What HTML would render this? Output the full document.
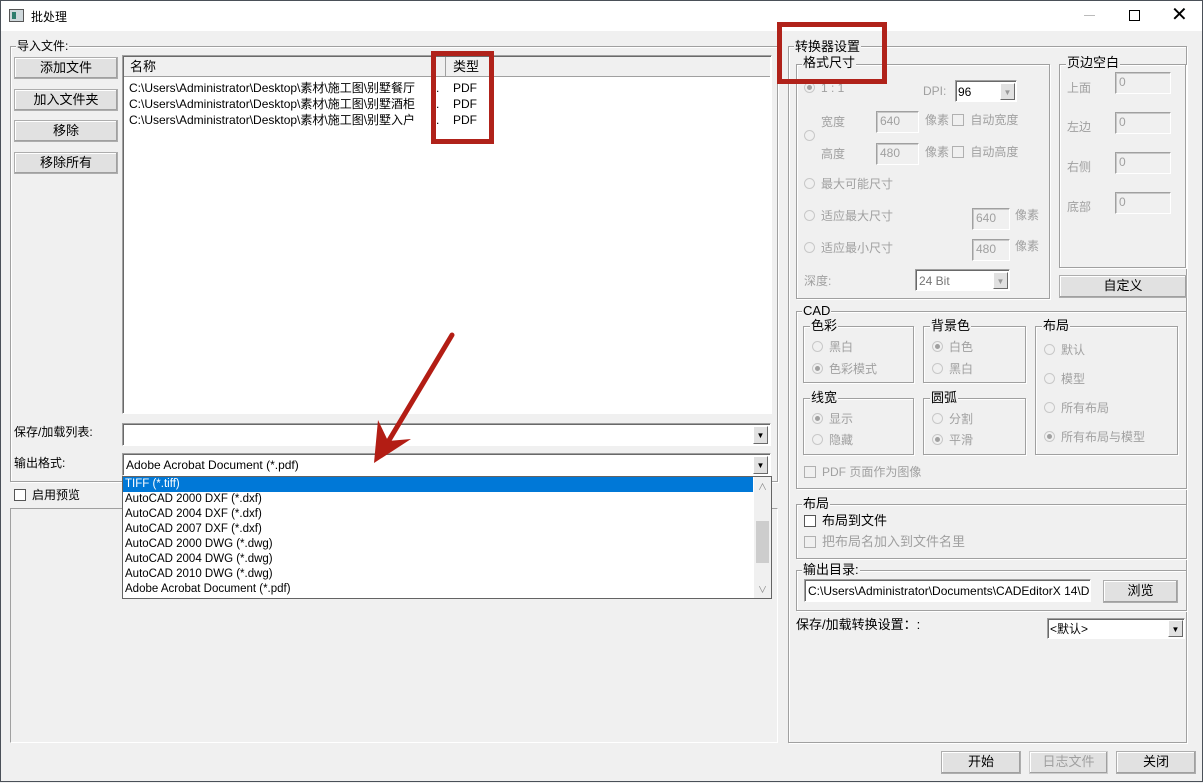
<!DOCTYPE html>
<html><head><meta charset="utf-8"><style>
*{box-sizing:border-box;margin:0;padding:0}
body{width:1203px;height:782px;background:#f0f0f0;position:relative;overflow:hidden;font-family:"Liberation Sans","Noto Sans CJK SC",sans-serif;font-size:12px;color:#000;border:1px solid #4a5058;line-height:14px}
.a{position:absolute;white-space:nowrap;line-height:14px}
.g{position:absolute;border:1px solid #a0a0a0;box-shadow:inset 1px 1px 0 #fff,1px 1px 0 #fff}
.gl{position:absolute;background:#f0f0f0;padding:0 1px;line-height:14px;white-space:nowrap}
.btn{position:absolute;background:#e1e1e1;border:1px solid #adadad;box-shadow:inset -1px -1px 0 #a0a0a0,inset 1px 1px 0 #fff;text-align:center;line-height:20px;font-size:13px}
.sunk{position:absolute;background:#fff;border:1px solid;border-color:#a0a0a0 #fff #fff #a0a0a0;box-shadow:inset 1px 1px 0 #696969}
.dis{color:#a0a0a0}
.tb{position:absolute;background:#f0f0f0;border:1px solid;border-color:#a0a0a0 #fff #fff #a0a0a0;box-shadow:inset 1px 1px 0 #c8c8c8;color:#a0a0a0;padding:2px 3px;line-height:14px}
.rad{display:inline-block;width:11px;height:11px;border:1px solid #c8c8c8;border-radius:50%;vertical-align:-1px;margin-right:6px;position:relative;background:#f0f0f0}
.rad.on::after{content:"";position:absolute;left:2px;top:2px;width:5px;height:5px;border-radius:50%;background:#a0a0a0}
.cb{display:inline-block;width:12px;height:12px;border:1px solid #555;background:#fff;vertical-align:-2px;margin-right:6px}
.cb.d{border-color:#b0b0b0;background:#f0f0f0}
.dd{position:absolute;width:15px;background:#e1e1e1;border:1px solid;border-color:#fff #696969 #696969 #fff;text-align:center;font-size:8px;line-height:17px}
</style></head><body>
<div class="a" style="left:0;top:0;width:1201px;height:30px;background:#fff"></div>
<div class="a" style="left:8px;top:8px;width:15px;height:13px;border:1px solid #555;background:#cfd8dc"><div style="position:absolute;left:2px;top:2px;width:4px;height:7px;background:#2e7d6e"></div></div>
<div class="a" style="left:30px;top:9px;font-size:12px">批处理</div>
<div class="a" style="left:1083px;top:14px;width:11px;height:1px;background:#bbb"></div>
<div class="a" style="left:1128px;top:9px;width:11px;height:11px;border:1px solid #000"></div>
<div class="a" style="left:1170px;top:4px;font-size:20px;line-height:20px;font-weight:300">✕</div>

<div class="g" style="left:9px;top:45px;width:768px;height:436px"></div>
<div class="gl" style="left:15px;top:38px">导入文件:</div>
<div class="btn" style="left:13px;top:56px;width:104px;height:22px">添加文件</div>
<div class="btn" style="left:13px;top:88px;width:104px;height:22px">加入文件夹</div>
<div class="btn" style="left:13px;top:119px;width:104px;height:22px">移除</div>
<div class="btn" style="left:13px;top:151px;width:104px;height:22px">移除所有</div>
<div class="sunk" style="left:121px;top:54px;width:650px;height:359px"></div>
<div class="a" style="left:123px;top:56px;width:646px;height:20px;background:#f0f0f0;border-bottom:1px solid #a0a0a0"></div>
<div class="a" style="left:444px;top:56px;width:1px;height:20px;background:#a0a0a0"></div>
<div class="a" style="left:129px;top:59px;font-size:13px">名称</div>
<div class="a" style="left:452px;top:59px;font-size:13px">类型</div>
<div class="a" style="left:128px;top:79px;line-height:16px">C:\Users\Administrator\Desktop\素材\施工图\别墅餐厅<br>C:\Users\Administrator\Desktop\素材\施工图\别墅酒柜<br>C:\Users\Administrator\Desktop\素材\施工图\别墅入户</div>
<div class="a" style="left:435px;top:79px;line-height:16px">.<br>.<br>.</div>
<div class="a" style="left:452px;top:79px;line-height:16px">PDF<br>PDF<br>PDF</div>

<div class="a" style="left:13px;top:424px">保存/加载列表:</div>
<div class="sunk" style="left:121px;top:422px;width:649px;height:23px"></div>
<div class="dd" style="left:752px;top:425px;height:18px">▼</div>
<div class="a" style="left:13px;top:455px">输出格式:</div>
<div class="sunk" style="left:121px;top:452px;width:649px;height:23px"></div>
<div class="a" style="left:125px;top:457px;font-size:12px">Adobe Acrobat Document (*.pdf)</div>
<div class="dd" style="left:752px;top:455px;height:18px">▼</div>

<div class="a" style="left:13px;top:487px"><span class="cb"></span>启用预览</div>
<div class="a" style="left:9px;top:507px;width:768px;height:235px;border:1px solid;border-color:#a0a0a0 #fff #fff #a0a0a0"></div>

<div class="a" style="left:121px;top:475px;width:650px;height:123px;background:#fff;border:1px solid #646464"></div>
<div class="a" style="left:122px;top:476px;width:630px;height:15px;background:#0078d7"></div>
<div class="a" style="left:124px;top:476px;line-height:15px;font-size:11.5px"><span style="color:#fff">TIFF (*.tiff)</span><br>AutoCAD 2000 DXF (*.dxf)<br>AutoCAD 2004 DXF (*.dxf)<br>AutoCAD 2007 DXF (*.dxf)<br>AutoCAD 2000 DWG (*.dwg)<br>AutoCAD 2004 DWG (*.dwg)<br>AutoCAD 2010 DWG (*.dwg)<br>Adobe Acrobat Document (*.pdf)</div>
<div class="a" style="left:753px;top:476px;width:17px;height:121px;background:#f0f0f0"></div>
<div class="a" style="left:755px;top:520px;width:13px;height:42px;background:#cdcdcd"></div>
<div class="a" style="left:757px;top:479px;font-size:9px;color:#888">∧</div>
<div class="a" style="left:757px;top:582px;font-size:9px;color:#888">∨</div>

<div class="g" style="left:787px;top:45px;width:399px;height:697px"></div>
<div class="gl" style="left:793px;top:39px;font-size:13px">转换器设置</div>
<div class="g" style="left:795px;top:63px;width:254px;height:235px"></div>
<div class="gl" style="left:801px;top:55px;font-size:13px">格式尺寸</div>
<div class="a dis" style="left:803px;top:80px"><span class="rad on"></span>1 : 1</div>
<div class="a dis" style="left:922px;top:83px">DPI:</div>
<div class="sunk" style="left:954px;top:79px;width:62px;height:22px"></div>
<div class="a" style="left:957px;top:84px">96</div>
<div class="dd" style="left:999px;top:82px;height:17px;color:#999">▼</div>
<div class="a dis" style="left:803px;top:128px"><span class="rad"></span></div>
<div class="a dis" style="left:820px;top:114px">宽度</div>
<div class="tb" style="left:875px;top:110px;width:43px;height:22px">640</div>
<div class="a dis" style="left:924px;top:112px">像素 <span class="cb d"></span>自动宽度</div>
<div class="a dis" style="left:820px;top:146px">高度</div>
<div class="tb" style="left:875px;top:142px;width:43px;height:22px">480</div>
<div class="a dis" style="left:924px;top:144px">像素 <span class="cb d"></span>自动高度</div>
<div class="a dis" style="left:803px;top:176px"><span class="rad"></span>最大可能尺寸</div>
<div class="a dis" style="left:803px;top:208px"><span class="rad"></span>适应最大尺寸</div>
<div class="tb" style="left:971px;top:207px;width:38px;height:22px">640</div>
<div class="a dis" style="left:1014px;top:207px">像素</div>
<div class="a dis" style="left:803px;top:240px"><span class="rad"></span>适应最小尺寸</div>
<div class="tb" style="left:971px;top:238px;width:38px;height:22px">480</div>
<div class="a dis" style="left:1014px;top:238px">像素</div>
<div class="a dis" style="left:803px;top:273px">深度:</div>
<div class="sunk" style="left:914px;top:268px;width:95px;height:22px;background:#fff"></div>
<div class="a dis" style="left:918px;top:273px;color:#777">24 Bit</div>
<div class="dd" style="left:992px;top:271px;height:17px;color:#999">▼</div>

<div class="g" style="left:1058px;top:63px;width:127px;height:204px"></div>
<div class="gl" style="left:1065px;top:55px;font-size:13px">页边空白</div>
<div class="a dis" style="left:1066px;top:80px">上面</div><div class="tb" style="left:1114px;top:71px;width:56px;height:22px">0</div>
<div class="a dis" style="left:1066px;top:119px">左边</div><div class="tb" style="left:1114px;top:111px;width:56px;height:22px">0</div>
<div class="a dis" style="left:1066px;top:159px">右侧</div><div class="tb" style="left:1114px;top:151px;width:56px;height:22px">0</div>
<div class="a dis" style="left:1066px;top:199px">底部</div><div class="tb" style="left:1114px;top:191px;width:56px;height:22px">0</div>
<div class="btn" style="left:1058px;top:274px;width:128px;height:23px">自定义</div>

<div class="g" style="left:795px;top:310px;width:391px;height:178px"></div>
<div class="gl" style="left:801px;top:303px;font-size:13px">CAD</div>
<div class="g" style="left:802px;top:325px;width:111px;height:57px"></div>
<div class="gl" style="left:809px;top:318px;font-size:13px">色彩</div>
<div class="a dis" style="left:811px;top:339px"><span class="rad"></span>黑白</div>
<div class="a dis" style="left:811px;top:361px"><span class="rad on"></span>色彩模式</div>
<div class="g" style="left:922px;top:325px;width:103px;height:57px"></div>
<div class="gl" style="left:929px;top:318px;font-size:13px">背景色</div>
<div class="a dis" style="left:931px;top:339px"><span class="rad on"></span>白色</div>
<div class="a dis" style="left:931px;top:361px"><span class="rad"></span>黑白</div>
<div class="g" style="left:1034px;top:325px;width:143px;height:129px"></div>
<div class="gl" style="left:1041px;top:318px;font-size:13px">布局</div>
<div class="a dis" style="left:1043px;top:342px"><span class="rad"></span>默认</div>
<div class="a dis" style="left:1043px;top:371px"><span class="rad"></span>模型</div>
<div class="a dis" style="left:1043px;top:400px"><span class="rad"></span>所有布局</div>
<div class="a dis" style="left:1043px;top:429px"><span class="rad on"></span>所有布局与模型</div>
<div class="g" style="left:802px;top:397px;width:111px;height:57px"></div>
<div class="gl" style="left:809px;top:390px;font-size:13px">线宽</div>
<div class="a dis" style="left:811px;top:411px"><span class="rad on"></span>显示</div>
<div class="a dis" style="left:811px;top:432px"><span class="rad"></span>隐藏</div>
<div class="g" style="left:922px;top:397px;width:103px;height:57px"></div>
<div class="gl" style="left:929px;top:390px;font-size:13px">圆弧</div>
<div class="a dis" style="left:931px;top:411px"><span class="rad"></span>分割</div>
<div class="a dis" style="left:931px;top:432px"><span class="rad on"></span>平滑</div>
<div class="a dis" style="left:803px;top:464px"><span class="cb d"></span>PDF 页面作为图像</div>

<div class="g" style="left:795px;top:503px;width:391px;height:55px"></div>
<div class="gl" style="left:801px;top:496px;font-size:13px">布局</div>
<div class="a" style="left:803px;top:513px;font-size:13px"><span class="cb"></span>布局到文件</div>
<div class="a dis" style="left:803px;top:534px;font-size:13px"><span class="cb d"></span>把布局名加入到文件名里</div>

<div class="g" style="left:795px;top:569px;width:391px;height:41px"></div>
<div class="gl" style="left:801px;top:562px;font-size:13px">输出目录:</div>
<div class="sunk" style="left:803px;top:578px;width:287px;height:23px"></div>
<div class="a" style="left:807px;top:583px;width:282px;overflow:hidden">C:\Users\Administrator\Documents\CADEditorX 14\D</div>
<div class="btn" style="left:1102px;top:579px;width:75px;height:23px">浏览</div>

<div class="a" style="left:795px;top:617px;font-size:13px">保存/加载转换设置：:</div>
<div class="sunk" style="left:1046px;top:617px;width:138px;height:21px"></div>
<div class="a" style="left:1049px;top:621px">&lt;默认&gt;</div>
<div class="dd" style="left:1167px;top:619px;height:17px">▼</div>

<div class="btn" style="left:940px;top:750px;width:80px;height:23px">开始</div>
<div class="btn dis" style="left:1028px;top:750px;width:79px;height:23px;border-color:#ccc">日志文件</div>
<div class="btn" style="left:1115px;top:750px;width:80px;height:23px">关闭</div>

<div class="a" style="left:430px;top:50px;width:63px;height:93px;border:5px solid #b0221a"></div>
<div class="a" style="left:776px;top:21px;width:110px;height:62px;border:5px solid #b0221a"></div>
<svg class="a" style="left:0;top:0" width="1203" height="782"><line x1="451" y1="334" x2="384" y2="446" stroke="#b31d14" stroke-width="5" stroke-linecap="round"/><polygon points="373,462 377,419 387,440 410,438" fill="#b31d14"/></svg>
</body></html>
